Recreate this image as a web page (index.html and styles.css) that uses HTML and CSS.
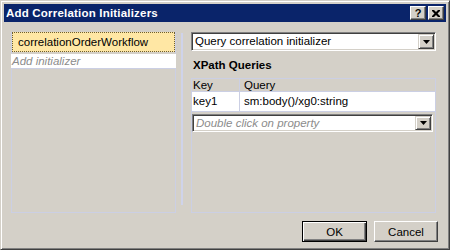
FILE: index.html
```html
<!DOCTYPE html>
<html lang="en">
<head>
  <meta charset="UTF-8">
  <title>Add Correlation Initializers</title>
  <link rel="stylesheet" href="styles.css">
</head>
<body>
  <div class="window">
    <div class="titlebar">
      <span class="title">Add Correlation Initializers</span>
      <div class="caption-btns">
        <div class="cap-btn help">?</div>
        <div class="cap-btn">
          <svg width="8" height="7" viewBox="0 0 8 7"><path d="M0 0h2l2 2 2-2h2v1l-2.5 2.5 2.5 2.5v1h-2l-2-2-2 2h-2v-1l2.5-2.5-2.5-2.5z" fill="#000"/></svg>
        </div>
      </div>
    </div>
    <div class="content">
      <div class="panes">
        <div class="init-list">
          <div class="init-item selected">correlationOrderWorkflow</div>
          <div class="init-add">Add initializer</div>
        </div>
        <div class="splitter"></div>
        <div class="details">
          <div class="combo">
            <span class="combo-text">Query correlation initializer</span>
            <div class="drop-btn"><svg width="7" height="4" viewBox="0 0 7 4"><path d="M0 0h7l-3.5 4z" fill="#000"/></svg></div>
          </div>
          <h3 class="section-title">XPath Queries</h3>
          <div class="query-table">
            <div class="q-row q-head">
              <div class="q-key">Key</div>
              <div class="q-query">Query</div>
            </div>
            <div class="q-row q-data">
              <div class="q-key">key1</div>
              <div class="q-query">sm:body()/xg0:string</div>
            </div>
            <div class="combo combo-small">
              <span class="combo-text placeholder">Double click on property</span>
              <div class="drop-btn"><svg width="7" height="4" viewBox="0 0 7 4"><path d="M0 0h7l-3.5 4z" fill="#000"/></svg></div>
            </div>
          </div>
        </div>
      </div>
      <div class="footer">
        <div class="btn default">OK</div>
        <div class="btn">Cancel</div>
      </div>
    </div>
  </div>
</body>
</html>
```

FILE: styles.css
```css
body {
  margin: 0;
  padding: 0;
  background-color: #d4d0c8;
}
.window {
  width: 450px;
  height: 250px;
  box-sizing: border-box;
  background: #d4d0c8;
  border: 1px solid;
  border-color: #d4d0c8 #404040 #404040 #d4d0c8;
  box-shadow: inset 1px 1px #fff, inset -1px -1px #808080;
  padding: 3px;
  display: flex;
  flex-direction: column;
  font-family: "Liberation Sans", Arial, sans-serif;
  font-size: 11.5px;
  color: #000;
}
.titlebar {
  height: 18px;
  flex: none;
  background: #0a246a;
  color: #fff;
  display: flex;
  align-items: center;
  justify-content: space-between;
  padding: 0 2px;
}
.title {
  font-weight: bold;
  font-size: 11.5px;
  letter-spacing: 0.2px;
}
.caption-btns {
  display: flex;
  gap: 2px;
}
.cap-btn {
  width: 16px;
  height: 14px;
  box-sizing: border-box;
  background: #d4d0c8;
  border: 1px solid;
  border-color: #fff #404040 #404040 #fff;
  box-shadow: inset -1px -1px #808080;
  display: flex;
  align-items: center;
  justify-content: center;
  color: #000;
}
.cap-btn.help {
  font-weight: bold;
  font-size: 11px;
  line-height: 12px;
}
.content {
  flex: 1;
  display: flex;
  flex-direction: column;
  padding: 10px 8px 4px 7px;
}
.panes {
  flex: 1;
  display: flex;
}
.init-list {
  width: 165px;
  box-sizing: border-box;
  border: 1px solid #cbcfe4;
  border-top: none;
}
.init-item {
  height: 20px;
  box-sizing: border-box;
  line-height: 18px;
  padding-left: 5px;
  background: #ffe7a4;
  border: 1px dotted #6e5e30;
}
.init-add {
  height: 14px;
  line-height: 14px;
  margin: 2px -1px 0 -1px;
  padding-left: 1px;
  background: #fff;
  border-bottom: 1px solid #cbcfe4;
  color: #8c8c8c;
  font-style: italic;
}
.splitter {
  width: 2px;
  margin: 1px 8px 8px 5px;
  background: #cfd3ea;
}
.details {
  flex: 1;
  display: flex;
  flex-direction: column;
  margin-right: 2px;
}
.combo {
  height: 19px;
  box-sizing: border-box;
  display: flex;
  align-items: stretch;
  background: #fff;
  border: 1px solid;
  border-color: #808080 #fff #fff #808080;
  box-shadow: inset 1px 1px #404040, inset -1px -1px #d4d0c8;
  padding: 1px;
}
.combo-text {
  flex: 1;
  padding-left: 2px;
  line-height: 15px;
}
.placeholder {
  color: #8c8c8c;
  font-style: italic;
}
.drop-btn {
  width: 16px;
  box-sizing: border-box;
  background: #d4d0c8;
  border: 1px solid;
  border-color: #d4d0c8 #404040 #404040 #d4d0c8;
  box-shadow: inset 1px 1px #fff, inset -1px -1px #808080;
  display: flex;
  align-items: center;
  justify-content: center;
}
.section-title {
  margin: 7px 0 6px 2px;
  font-size: 11.5px;
  line-height: 14px;
  font-weight: bold;
}
.query-table {
  flex: 1;
  border: 1px solid #cbcfe4;
}
.q-row {
  display: flex;
  border-bottom: 1px solid #cbcfe4;
}
.q-head {
  height: 12px;
  line-height: 12px;
}
.q-data {
  height: 19px;
  line-height: 19px;
  background: #fff;
}
.q-key {
  width: 46px;
  padding-left: 1px;
  border-right: 1px solid #cbcfe4;
}
.q-query {
  padding-left: 4px;
}
.combo-small {
  height: 18px;
  margin: 2px 2px 0 0;
}
.combo-small .combo-text {
  line-height: 14px;
}
.footer {
  flex: none;
  display: flex;
  justify-content: flex-end;
  gap: 7px;
  margin-top: 8px;
}
.btn {
  width: 64px;
  height: 21px;
  box-sizing: border-box;
  border: 1px solid;
  border-color: #fff #404040 #404040 #fff;
  box-shadow: inset -1px -1px #808080;
  display: flex;
  align-items: center;
  justify-content: center;
}
.btn.default {
  width: 65px;
  border-color: #000;
  box-shadow: inset 1px 1px #fff, inset -1px -1px #404040, inset -2px -2px #808080;
}
```
